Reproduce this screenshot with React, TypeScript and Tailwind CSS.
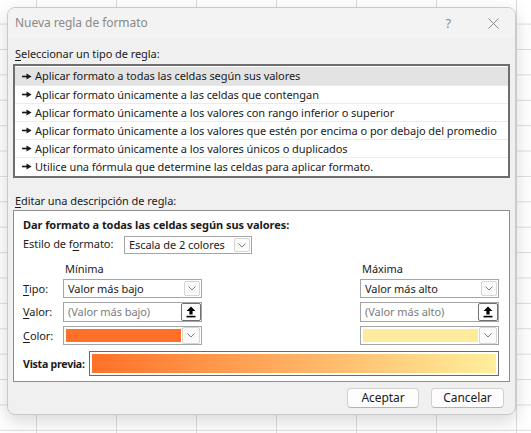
import type { ReactNode } from 'react';

const ruleTypes = [
  'Aplicar formato a todas las celdas según sus valores',
  'Aplicar formato únicamente a las celdas que contengan',
  'Aplicar formato únicamente a los valores con rango inferior o superior',
  'Aplicar formato únicamente a los valores que estén por encima o por debajo del promedio',
  'Aplicar formato únicamente a los valores únicos o duplicados',
  'Utilice una fórmula que determine las celdas para aplicar formato.',
];

function Key({ children }: { children: ReactNode }) {
  return <span className="underline underline-offset-[2px]">{children}</span>;
}

function RuleArrow() {
  return (
    <svg width="10" height="7" viewBox="0 0 10 7" className="shrink-0">
      <rect x="0" y="2.7" width="5" height="1.6" fill="#1a1a1a" />
      <path d="M4.5 0.6 L9.6 3.5 L4.5 6.4 Z" fill="#1a1a1a" />
    </svg>
  );
}

function ChevronButton({ className }: { className: string }) {
  return (
    <span className={`flex shrink-0 items-center justify-center rounded-[2px] border border-[#d6d6d6] bg-[#fbfbfb] ${className}`}>
      <svg width="8" height="5" viewBox="0 0 8 5">
        <path d="M0.5 0.5 L4 4 L7.5 0.5" fill="none" stroke="#6e6e6e" strokeWidth="0.9" />
      </svg>
    </span>
  );
}

function Select({ value }: { value: string }) {
  return (
    <div className="flex h-[19px] items-center justify-between border border-[#a5a5a5] bg-white pl-[4px] pr-px">
      <span>{value}</span>
      <ChevronButton className="h-[15px] w-[16px]" />
    </div>
  );
}

function ValueInput({ placeholder }: { placeholder: string }) {
  return (
    <div className="flex h-[20px] items-center border border-[#a5a5a5] bg-white pl-[4px]">
      <span className="flex-1 text-[#7b7b7b]">{placeholder}</span>
      <span className="flex h-[18px] w-[20px] items-center justify-center rounded-[2px] border border-[#6f6f6f] bg-white">
        <svg width="10" height="12" viewBox="0 0 10 12">
          <path d="M5 0.5 L9.5 5 H6.6 V8.4 H3.4 V5 H0.5 Z" fill="#000" />
          <rect x="0.5" y="9.8" width="9" height="1.6" fill="#000" />
        </svg>
      </span>
    </div>
  );
}

function ColorSelect({ color }: { color: string }) {
  return (
    <div className="flex h-[19px] items-center gap-px border border-[#a5a5a5] bg-white pl-[2px] pr-px">
      <span className={`h-[13px] flex-1 ${color}`} />
      <ChevronButton className="h-[17px] w-[18px]" />
    </div>
  );
}

export default function App() {
  return (
    <div className="relative h-[433px] w-[531px] overflow-hidden bg-white bg-[linear-gradient(to_right,#dcdcdc_1px,transparent_1px),linear-gradient(to_bottom,#dcdcdc_1px,transparent_1px)] [background-size:80px_25.4px] [background-position:36px_23.6px] [font-family:'Noto_Sans',sans-serif] text-[11px] leading-[16px] tracking-[-0.06px] text-[#1b1b1b]">
      {/* Dialog */}
      <div className="absolute left-[7px] top-[7px] flex h-[408px] w-[509px] flex-col overflow-hidden rounded-[8px] border border-[#c9c9c9] bg-[#f0f0f0] shadow-[0_6px_18px_rgba(0,0,0,0.16)]">
        {/* Title bar */}
        <div className="flex h-[30px] shrink-0 items-center bg-[#f3f3f3] pl-[7px] pr-[16px] text-[12px] text-[#8a8a8a]">
          <span className="flex-1">Nueva regla de formato</span>
          <span className="mr-[37px] text-[13px]">?</span>
          <svg width="11" height="11" viewBox="0 0 11 11">
            <path d="M0.5 0.5 L10.5 10.5 M10.5 0.5 L0.5 10.5" stroke="#8a8a8a" strokeWidth="1" />
          </svg>
        </div>

        <div className="flex flex-1 flex-col px-[5px]">
          <div className="mt-[8px] pl-[2px]">
            <Key>S</Key>eleccionar un tipo de regla:
          </div>

          {/* Rule type list */}
          <div className="mt-[2px] flex h-[114px] flex-col border-2 border-[#6e6e6e] bg-white py-px">
            {ruleTypes.map((rule, i) => (
              <div
                key={rule}
                className={`flex h-[18px] items-center gap-[3px] pl-[7px] ${i === 0 ? 'bg-[#e3e3e3]' : 'border-t border-[#ebebeb]'}`}
              >
                <RuleArrow />
                <span className="whitespace-nowrap">{rule}</span>
              </div>
            ))}
          </div>

          <div className="mt-[15px] pl-[2px]">
            <Key>E</Key>ditar una descripción de regla:
          </div>

          {/* Rule description */}
          <div className="mt-px flex h-[172px] flex-col border border-[#8e8e8e] bg-white pl-[9px] pr-[10px] pt-[6px]">
            <div className="font-bold">Dar formato a todas las celdas según sus valores:</div>
            <div className="mt-[3px] flex items-start">
              <span className="w-[101px]">
                Estilo de f<Key>o</Key>rmato:
              </span>
              <div className="flex h-[18px] w-[128px] items-center justify-between border border-[#a5a5a5] bg-white pl-[4px] pr-px">
                <span>Escala de 2 colores</span>
                <ChevronButton className="h-[14px] w-[16px]" />
              </div>
            </div>

            <div className="mt-[7px] grid grid-cols-[40px_139px_1fr_139px]">
              <span />
              <span className="pl-[2px]">Mínima</span>
              <span />
              <span className="pl-[2px]">Máxima</span>
            </div>

            <div className="mt-[2px] grid grid-cols-[40px_139px_1fr_139px] items-center gap-y-[4px]">
              <span>
                <Key>T</Key>ipo:
              </span>
              <Select value="Valor más bajo" />
              <span />
              <Select value="Valor más alto" />

              <span>
                <Key>V</Key>alor:
              </span>
              <ValueInput placeholder="(Valor más bajo)" />
              <span />
              <ValueInput placeholder="(Valor más alto)" />

              <span>
                <Key>C</Key>olor:
              </span>
              <ColorSelect color="bg-[#ff7128]" />
              <span />
              <ColorSelect color="bg-[#ffeb9c]" />
            </div>

            <div className="mt-[6px] flex items-center">
              <span className="w-[66px] shrink-0 whitespace-nowrap text-[10.6px] font-bold tracking-[-0.25px]">Vista previa:</span>
              <div className="h-[25px] flex-1 border border-[#6a6a6a] bg-white p-[2px]">
                <div className="h-full bg-[linear-gradient(to_right,#ff7128,#ffef9c)]" />
              </div>
            </div>
          </div>

          {/* Buttons */}
          <div className="mt-[6px] flex justify-end gap-[12px] pr-[6px] text-[12px]">
            <button className="h-[20px] w-[72px] rounded-[4px] border border-[#d0d0d0] border-b-[#b5b5b5] bg-[#fdfdfd] leading-[18px]">
              Aceptar
            </button>
            <button className="h-[20px] w-[73px] rounded-[4px] border border-[#d0d0d0] border-b-[#b5b5b5] bg-[#fdfdfd] leading-[18px]">
              Cancelar
            </button>
          </div>
        </div>
      </div>
    </div>
  );
}
